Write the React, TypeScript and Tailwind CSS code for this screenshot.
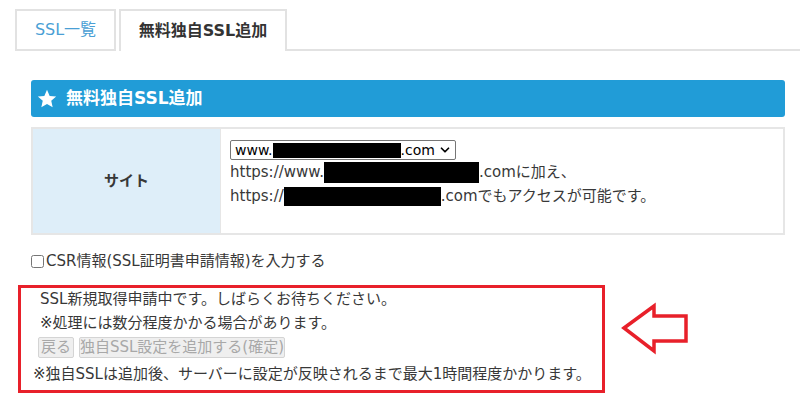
import React from 'react';
import { ChevronDown } from 'lucide-react';

const font = { fontFamily: '"DejaVu Sans", "Noto Sans CJK JP", sans-serif' };

function Redacted({ w, h }: { w: number; h: number }) {
  return <span className="inline-block bg-black align-middle" style={{ width: w, height: h }} />;
}

function StarIcon() {
  return (
    <svg width="20" height="20" viewBox="0 0 24 24" className="shrink-0">
      <polygon
        points="12,1 15.2,8.3 23,9 17.1,14.2 18.8,22 12,18 5.2,22 6.9,14.2 1,9 8.8,8.3"
        fill="#ffffff"
      />
    </svg>
  );
}

function LeftArrow() {
  return (
    <svg width="74" height="56" viewBox="0 0 74 56" className="shrink-0">
      <polygon
        points="6,28 36,6 36,16 68,16 68,41 36,41 36,51"
        fill="none"
        stroke="#e8202a"
        strokeWidth="3.5"
        strokeLinejoin="miter"
      />
    </svg>
  );
}

export default function App() {
  return (
    <div className="w-[800px] h-[403px] bg-white text-[#383838] text-[15px] overflow-hidden" style={font}>
      {/* Tabs */}
      <div className="flex items-end pl-[15px] pt-[9px]">
        <div className="w-[101px] h-[42px] border-2 border-[#e2e2e2] flex items-center justify-center text-[#4a9fd5] text-[16px]">
          SSL一覧
        </div>
        <div className="w-[3px] h-[42px]" />
        <div className="w-[168px] h-[42px] border-2 border-b-0 border-[#e2e2e2] flex items-center justify-center font-bold text-[16px] text-[#333]">
          無料独自SSL追加
        </div>
        <div className="flex-1 h-[42px] border-b-2 border-[#e2e2e2]" />
      </div>

      {/* Section header */}
      <div className="ml-[31px] mt-[29px] w-[754px] h-[37px] bg-[#219cd7] rounded-[3px] flex items-center pl-[6px] gap-[9px]">
        <StarIcon />
        <span className="text-white font-bold text-[17px]">無料独自SSL追加</span>
      </div>

      {/* Site table */}
      <div className="ml-[31px] mt-[10px] w-[754px] h-[108px] border-2 border-[#e6e6e6] flex">
        <div className="w-[188px] bg-[#deeef9] border-r border-[#e6e6e6] flex items-center justify-center font-bold text-[15px]">
          サイト
        </div>
        <div className="flex-1 pl-[9px] pt-[11px]">
          <div className="w-[226px] h-[20px] border border-[#767676] rounded-[2px] flex items-center pl-[4px] pr-[3px] text-[14px] text-black leading-none">
            <span>www.</span>
            <Redacted w={128} h={15} />
            <span>.com</span>
            <ChevronDown className="w-[14px] h-[14px] ml-auto" strokeWidth={3} />
          </div>
          <div className="h-[24px] flex items-center whitespace-nowrap">
            <span>https://www.</span>
            <Redacted w={155} h={21} />
            <span>.comに加え、</span>
          </div>
          <div className="h-[24px] flex items-center whitespace-nowrap">
            <span>https://</span>
            <Redacted w={157} h={19} />
            <span>.comでもアクセスが可能です。</span>
          </div>
        </div>
      </div>

      {/* CSR checkbox */}
      <label className="ml-[31px] mt-[14px] h-[24px] flex items-center gap-[2px]">
        <input type="checkbox" className="w-[13px] h-[13px]" />
        <span>CSR情報(SSL証明書申請情報)を入力する</span>
      </label>

      {/* Status box */}
      <div className="flex items-start mt-[12px]">
        <div className="ml-[18px] w-[587px] h-[108px] border-[3px] border-[#e8202a] pl-[12px]">
          <div className="pl-[7px] h-[23px] flex items-center">SSL新規取得申請中です。しばらくお待ちください。</div>
          <div className="pl-[7px] h-[25px] flex items-center">※処理には数分程度かかる場合があります。</div>
          <div className="pl-[5px] mt-[1px] flex gap-[5px]">
            <button
              disabled
              className="w-[36px] h-[21px] bg-[#efefef] border border-[#d4d4d4] rounded-[2px] text-[#a8a8a8] text-[15px] leading-none flex items-center justify-center whitespace-nowrap"
            >
              戻る
            </button>
            <button
              disabled
              className="w-[206px] h-[21px] bg-[#efefef] border border-[#d4d4d4] rounded-[2px] text-[#a8a8a8] text-[15px] leading-none flex items-center justify-center whitespace-nowrap"
            >
              独自SSL設定を追加する(確定)
            </button>
          </div>
          <div className="mt-[4px] h-[24px] flex items-center whitespace-nowrap">
            ※独自SSLは追加後、サーバーに設定が反映されるまで最大1時間程度かかります。
          </div>
        </div>
        <div className="ml-[13px] mt-[15px]">
          <LeftArrow />
        </div>
      </div>
    </div>
  );
}
